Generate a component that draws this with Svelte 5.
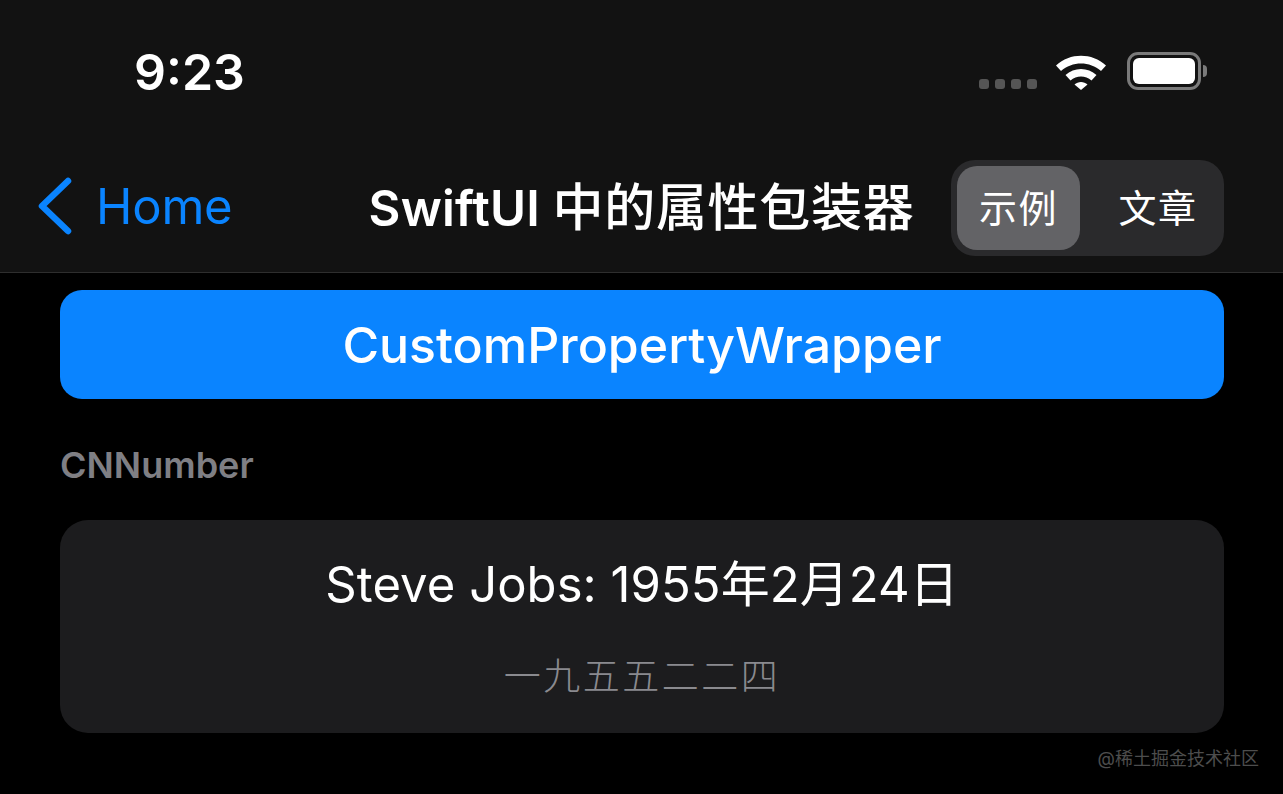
<script>
  let tabs = ["示例", "文章"];
  let selected = "示例";
</script>

<div class="screen">
  <header>
    <div class="status">
      <span class="time">9:23</span>
      <div class="indicators">
        <div class="dots"><i></i><i></i><i></i><i></i></div>
        <svg class="wifi" width="52" height="38" viewBox="0 0 52 38">
          <path d="M1 13.5C15 0.5 37 0.5 51 13.5L46 19C35 9 17 9 6 19Z" fill="#fff" />
          <path d="M10.5 23C19 15 33 15 41.5 23L36.5 28.5C30.5 23 21.5 23 15.5 28.5Z" fill="#fff" />
          <path d="M19.5 32.5C23 29 29 29 32.5 32.5L26 38Z" fill="#fff" />
        </svg>
        <div class="battery"><div class="level"></div></div>
        <div class="cap"></div>
      </div>
    </div>
    <nav>
      <a class="back" href="#home">
        <svg width="36" height="58" viewBox="0 0 36 58">
          <path d="M31 4L5 29L31 54" fill="none" stroke="#0a84ff" stroke-width="6.5" stroke-linecap="round" stroke-linejoin="round" />
        </svg>
        <span>Home</span>
      </a>
      <h1>SwiftUI <span class="cjk">中的属性包装器</span></h1>
      <div class="segmented">
        {#each tabs as tab}
          <button class:active={tab == selected} on:click={() => (selected = tab)}>{tab}</button>
        {/each}
      </div>
    </nav>
  </header>

  <main>
    <button class="primary">CustomPropertyWrapper</button>
    <h2>CNNumber</h2>
    <section class="card">
      <p class="date">Steve Jobs: 1955年2月24日</p>
      <p class="number">一九五五二二四</p>
    </section>
  </main>

  <span class="watermark">@稀土掘金技术社区</span>
</div>

<style>
  :global(body) {
    background: #000;
  }

  .screen {
    width: 1283px;
    height: 794px;
    overflow: hidden;
    position: relative;
    background: #000;
    color: #fff;
    font-family: Inter, "Noto Sans CJK SC", sans-serif;
  }

  header {
    height: 272px;
    background: #121212;
    border-bottom: 1px solid #2e2e2e;
  }

  .status {
    height: 160px;
    padding: 41px 76px 0 134px;
    box-sizing: border-box;
    display: flex;
    justify-content: space-between;
    align-items: flex-start;
  }

  .time {
    font-size: 50px;
    font-weight: 600;
    line-height: 62px;
  }

  .indicators {
    display: flex;
    align-items: center;
    margin-top: 11px;
  }

  .dots {
    display: flex;
    gap: 6px;
    margin: 26px 18px 0 0;
  }

  .dots i {
    width: 10px;
    height: 10px;
    border-radius: 3px;
    background: #555;
  }

  .wifi {
    margin-right: 20px;
  }

  .battery {
    width: 74px;
    height: 38px;
    box-sizing: border-box;
    border: 3px solid #7a7a7a;
    border-radius: 11px;
    padding: 3px;
  }

  .level {
    height: 100%;
    background: #fff;
    border-radius: 6px;
  }

  .cap {
    width: 4px;
    height: 12px;
    margin-left: 2px;
    background: #7a7a7a;
    border-radius: 0 6px 6px 0;
  }

  nav {
    display: grid;
    grid-template-columns: 1fr auto 1fr;
    align-items: center;
    height: 96px;
    padding: 0 59px;
  }

  .back {
    display: flex;
    align-items: center;
    gap: 23px;
    margin: 0 0 4px -22px;
    color: #0a84ff;
    text-decoration: none;
    font-size: 49px;
    letter-spacing: -0.2px;
  }

  h1 {
    margin: 0 0 9px;
    font-size: 49px;
    font-weight: 600;
    white-space: nowrap;
    letter-spacing: 0.2px;
  }

  .cjk {
    font-size: 51px;
    font-weight: 500;
    letter-spacing: 0.7px;
  }

  .segmented {
    justify-self: end;
    display: flex;
    width: 273px;
    height: 96px;
    box-sizing: border-box;
    padding: 6px;
    background: #2a2a2c;
    border-radius: 24px;
  }

  .segmented button {
    flex: 1;
    border: 0;
    padding: 0 0 6px 18px;
    background: none;
    color: #fff;
    font: 400 38px Inter, "Noto Sans CJK SC", sans-serif;
    letter-spacing: 1.5px;
    border-radius: 20px;
  }

  .segmented button.active {
    flex: 0 0 123px;
    padding-left: 0;
    background: #636366;
  }

  main {
    padding: 17px 59px 0 60px;
  }

  .primary {
    display: block;
    width: 100%;
    height: 109px;
    border: 0;
    border-radius: 22px;
    background: #0a84ff;
    color: #fff;
    font: 500 50px Inter, sans-serif;
  }

  h2 {
    margin: 44px 0 33px 0;
    font-size: 36px;
    line-height: 44px;
    font-weight: 600;
    color: #7f7f84;
  }

  .card {
    height: 213px;
    box-sizing: border-box;
    padding-top: 36px;
    background: #1c1c1e;
    border-radius: 28px;
    text-align: center;
  }

  .card p {
    margin: 0;
  }

  .date {
    font-size: 49px;
    line-height: 58px;
    letter-spacing: 0.05px;
  }

  .number {
    margin-top: 40px !important;
    font-size: 37px;
    line-height: 46px;
    font-weight: 300;
    color: #8a8a8f;
    letter-spacing: 2.5px;
  }

  .watermark {
    position: absolute;
    right: 24px;
    bottom: 24px;
    font-size: 18px;
    color: #4d4d4d;
  }
</style>
